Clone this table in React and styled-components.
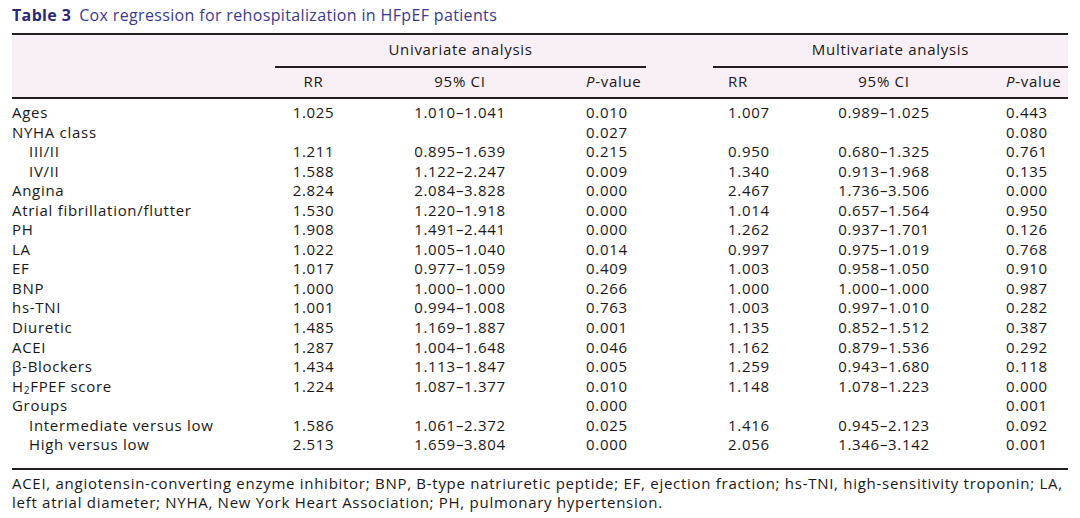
import React from "react";
import styled, { createGlobalStyle } from "styled-components";

const Global = createGlobalStyle`
  html, body { margin: 0; padding: 0; background: #ffffff; }
  body { font-family: "Open Sans", "Noto Sans", sans-serif; color: #1a1718; }
`;

const Page = styled.div`
  width: 1056px;
  padding: 4px 12px 0 12px;
`;

const Title = styled.div`
  font-size: 16px;
  letter-spacing: 0.35px;
  line-height: 22px;
  height: 29px;
  color: #3a3991;
  b { color: #2b2878; font-weight: 700; margin-right: 8px; }
`;

const Table = styled.table`
  width: 1056px;
  border-collapse: collapse;
  table-layout: fixed;
  font-size: 15px;
  font-weight: 500;
  letter-spacing: 0.7px;
  border-top: 2px solid #231f20;
  border-bottom: 2px solid #231f20;
`;

const Head = styled.thead`
  background: #f9eff6;
  border-bottom: 2px solid #231f20;
`;

const GroupTh = styled.th`
  font-weight: 500;
  text-align: center;
  padding: 0 0 3px 0;
  height: 28px;
  vertical-align: middle;
  border-bottom: ${(p) => (p.$line ? "2px solid #231f20" : "none")};
`;

const ColTh = styled.th`
  font-weight: 500;
  height: 26px;
  padding: 0 0 3px ${(p) => p.$pad || 0}px;
  text-align: ${(p) => p.$align || "center"};
  vertical-align: middle;
  i { font-style: italic; }
`;

const Body = styled.tbody`
  tr:first-child td { padding-top: 4px; }
  tr:last-child td { padding-bottom: 13px; }
`;

const Td = styled.td`
  padding: 0 0 0 ${(p) => p.$pad || 0}px;
  line-height: 19.55px;
  white-space: nowrap;
  text-align: ${(p) => p.$align || "left"};
`;

const Label = styled(Td)`
  padding-left: ${(p) => (p.$indent ? 17 : 0)}px;
`;

const Sub = styled.sub`
  font-size: 10px;
  line-height: 0;
  vertical-align: -2px;
`;

const Footnote = styled.p`
  margin: 4px 0 0 0;
  font-size: 15px;
  font-weight: 500;
  letter-spacing: 0.72px;
  line-height: 19.5px;
`;

const rows = [
  ["Ages", 0, "1.025", "1.010–1.041", "0.010", "1.007", "0.989–1.025", "0.443"],
  ["NYHA class", 0, "", "", "0.027", "", "", "0.080"],
  ["III/II", 1, "1.211", "0.895–1.639", "0.215", "0.950", "0.680–1.325", "0.761"],
  ["IV/II", 1, "1.588", "1.122–2.247", "0.009", "1.340", "0.913–1.968", "0.135"],
  ["Angina", 0, "2.824", "2.084–3.828", "0.000", "2.467", "1.736–3.506", "0.000"],
  ["Atrial fibrillation/flutter", 0, "1.530", "1.220–1.918", "0.000", "1.014", "0.657–1.564", "0.950"],
  ["PH", 0, "1.908", "1.491–2.441", "0.000", "1.262", "0.937–1.701", "0.126"],
  ["LA", 0, "1.022", "1.005–1.040", "0.014", "0.997", "0.975–1.019", "0.768"],
  ["EF", 0, "1.017", "0.977–1.059", "0.409", "1.003", "0.958–1.050", "0.910"],
  ["BNP", 0, "1.000", "1.000–1.000", "0.266", "1.000", "1.000–1.000", "0.987"],
  ["hs-TNI", 0, "1.001", "0.994–1.008", "0.763", "1.003", "0.997–1.010", "0.282"],
  ["Diuretic", 0, "1.485", "1.169–1.887", "0.001", "1.135", "0.852–1.512", "0.387"],
  ["ACEI", 0, "1.287", "1.004–1.648", "0.046", "1.162", "0.879–1.536", "0.292"],
  ["β-Blockers", 0, "1.434", "1.113–1.847", "0.005", "1.259", "0.943–1.680", "0.118"],
  ["H2FPEF", 0, "1.224", "1.087–1.377", "0.010", "1.148", "1.078–1.223", "0.000"],
  ["Groups", 0, "", "", "0.000", "", "", "0.001"],
  ["Intermediate versus low", 1, "1.586", "1.061–2.372", "0.025", "1.416", "0.945–2.123", "0.092"],
  ["High versus low", 1, "2.513", "1.659–3.804", "0.000", "2.056", "1.346–3.142", "0.001"],
];

function LabelText({ text }) {
  if (text === "H2FPEF") {
    return (
      <>
        H<Sub>2</Sub>FPEF score
      </>
    );
  }
  return text;
}

export default function App() {
  return (
    <Page>
      <Global />
      <Title>
        <b>Table 3</b>Cox regression for rehospitalization in HFpEF patients
      </Title>
      <Table>
        <colgroup>
          <col style={{ width: 263 }} />
          <col style={{ width: 77 }} />
          <col style={{ width: 216 }} />
          <col style={{ width: 78 }} />
          <col style={{ width: 67 }} />
          <col style={{ width: 87 }} />
          <col style={{ width: 168 }} />
          <col style={{ width: 100 }} />
        </colgroup>
        <Head>
          <tr>
            <GroupTh />
            <GroupTh colSpan={3} $line>Univariate analysis</GroupTh>
            <GroupTh />
            <GroupTh colSpan={3} $line>Multivariate analysis</GroupTh>
          </tr>
          <tr>
            <ColTh />
            <ColTh>RR</ColTh>
            <ColTh>95% CI</ColTh>
            <ColTh $align="left" $pad={18}><i>P</i>-value</ColTh>
            <ColTh />
            <ColTh $align="left" $pad={15}>RR</ColTh>
            <ColTh>95% CI</ColTh>
            <ColTh $align="left" $pad={38}><i>P</i>-value</ColTh>
          </tr>
        </Head>
        <Body>
          {rows.map((r) => (
            <tr key={r[0]}>
              <Label $indent={r[1]}><LabelText text={r[0]} /></Label>
              <Td $align="center">{r[2]}</Td>
              <Td $align="center">{r[3]}</Td>
              <Td $pad={18}>{r[4]}</Td>
              <Td />
              <Td $pad={15}>{r[5]}</Td>
              <Td $align="center">{r[6]}</Td>
              <Td $pad={38}>{r[7]}</Td>
            </tr>
          ))}
        </Body>
      </Table>
      <Footnote>
        ACEI, angiotensin-converting enzyme inhibitor; BNP, B-type natriuretic peptide; EF, ejection fraction; hs-TNI, high-sensitivity troponin; LA, left atrial diameter; NYHA, New York Heart Association; PH, pulmonary hypertension.
      </Footnote>
    </Page>
  );
}
